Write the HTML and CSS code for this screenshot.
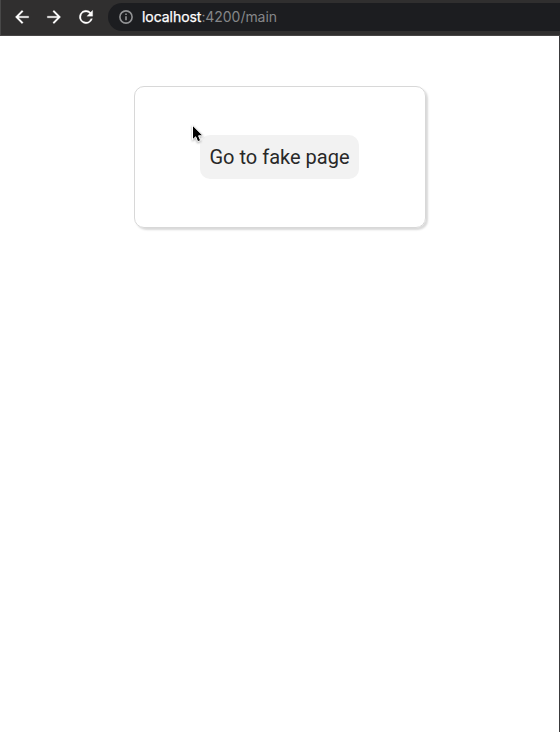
FILE: index.html
```html
<!DOCTYPE html>
<html lang="en">
<head>
<meta charset="utf-8">
<title>localhost</title>
<link rel="stylesheet" href="styles.css">
</head>
<body>
<div class="window">
  <header class="toolbar">
    <nav class="nav">
      <svg class="icon" viewBox="0 0 24 24"><path d="M20 11H7.83l5.59-5.59L12 4l-8 8 8 8 1.41-1.41L7.83 13H20z"/></svg>
      <svg class="icon" viewBox="0 0 24 24"><path d="M4 11h12.17l-5.59-5.59L12 4l8 8-8 8-1.41-1.41L16.17 13H4z"/></svg>
      <svg class="icon" viewBox="0 0 24 24"><path d="M17.65 6.35A8 8 0 1 0 19.73 14h-2.08A6 6 0 1 1 12 6c1.66 0 3.14.69 4.22 1.78L13 11h7V4z"/></svg>
    </nav>
    <div class="address">
      <svg class="info" viewBox="0 0 14 14"><circle cx="7" cy="7" r="6.1"/><path d="M7 6.2v4.1M7 3.5v1.5"/></svg>
      <span class="url"><span class="host">localhost</span>:4200/main</span>
    </div>
  </header>
  <main class="page">
    <section class="card">
      <button class="button">Go to fake page</button>
    </section>
  </main>
  <svg class="cursor" viewBox="0 0 15 21"><path d="M1.5 1.2v14.6l3.2-3 2 4.9 2.9-1.2-2-4.7h4.5z"/></svg>
</div>
</body>
</html>
```
FILE: styles.css
```css
* {
  box-sizing: border-box;
}

body {
  margin: 0;
  background: #fff;
  font-family: Roboto, sans-serif;
}

.window {
  position: relative;
  height: 732px;
  overflow: hidden;
  display: flex;
  flex-direction: column;
}

.toolbar {
  flex: none;
  height: 36px;
  padding: 3px 0 5px 12px;
  display: flex;
  background: #302f2f;
  border-bottom: 1px solid #474545;
  box-shadow: inset 1px 0 #484848;
}

.nav {
  width: 96px;
  display: flex;
  align-items: center;
  gap: 12px;
}

.icon {
  width: 20px;
  height: 20px;
  fill: #fff;
  stroke: #fff;
  stroke-width: 0.3;
}

.address {
  flex: 1;
  height: 28px;
  padding-left: 11px;
  display: flex;
  align-items: center;
  gap: 9px;
  border-radius: 14px 0 0 14px;
  background: #1c1d20;
}

.info {
  width: 14px;
  height: 14px;
  fill: none;
  stroke: #929395;
  stroke-width: 1.6;
}

.url {
  color: #858688;
  font-family: Inter, sans-serif;
  font-size: 14px;
  line-height: 20px;
  letter-spacing: -0.05px;
}

.host {
  color: #fff;
  -webkit-text-stroke: 0.25px #fff;
}

.page {
  flex: 1;
  padding-top: 50px;
  border-right: 1px solid #3a3a3c;
}

.card {
  width: 292px;
  height: 142px;
  margin-left: 134px;
  display: flex;
  align-items: center;
  justify-content: center;
  border: 1px solid #d8d8d8;
  border-radius: 10px;
  box-shadow: 2px 2px 2px #dadada;
}

.button {
  width: 159px;
  height: 44px;
  padding: 0;
  margin-right: 1px;
  border: 0;
  border-radius: 10px;
  background: #f2f2f2;
  color: #282828;
  font: 20px/24px Roboto, sans-serif;
}

.cursor {
  position: absolute;
  left: 191px;
  top: 124px;
  width: 15px;
  height: 21px;
  fill: #000;
  stroke: #fff;
  stroke-width: 1;
  filter: drop-shadow(0 1px 1px rgba(0, 0, 0, 0.35));
}
```
